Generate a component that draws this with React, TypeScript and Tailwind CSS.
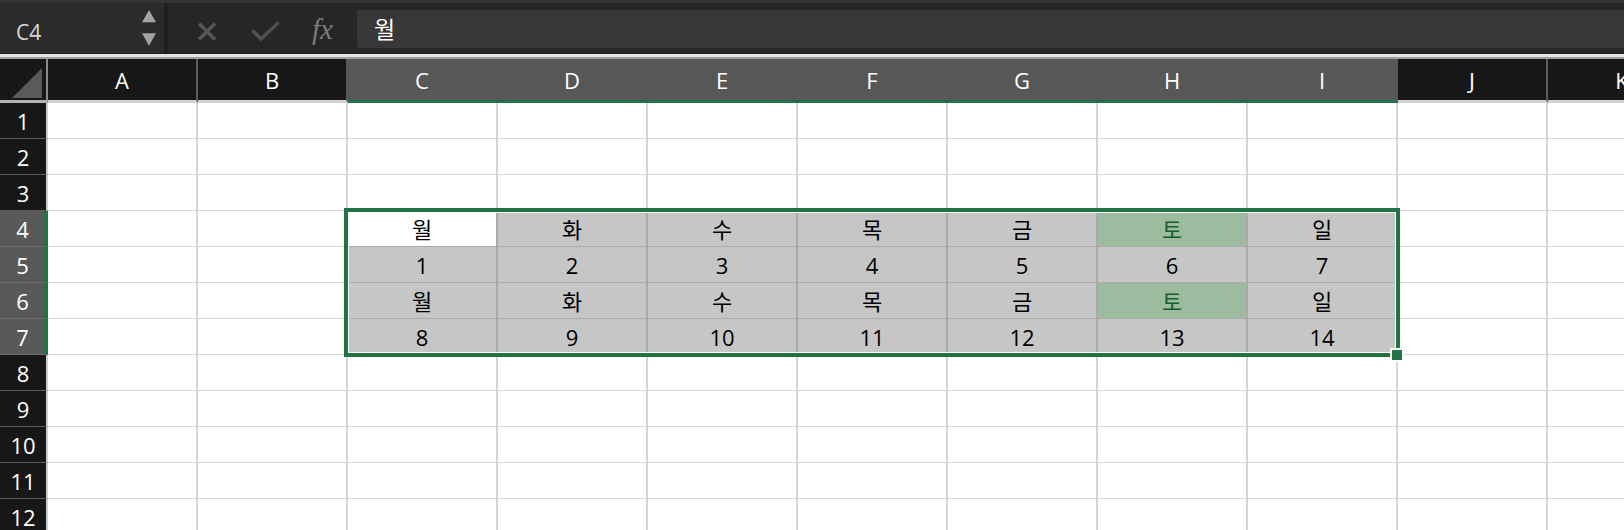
import React from "react";

const COLS = ["A", "B", "C", "D", "E", "F", "G", "H", "I", "J", "K"];
const DAYS = ["월", "화", "수", "목", "금", "토", "일"];
const DATA: Record<number, string[]> = {
  4: DAYS,
  5: ["1", "2", "3", "4", "5", "6", "7"],
  6: DAYS,
  7: ["8", "9", "10", "11", "12", "13", "14"],
};

const inColRange = (ci: number) => ci >= 2 && ci <= 8;
const inRowRange = (r: number) => r >= 4 && r <= 7;

function Cell({ r, ci }: { r: number; ci: number }) {
  const inRange = inRowRange(r) && inColRange(ci);
  const active = r === 4 && ci === 2;
  const good = inRange && ci === 7 && (r === 4 || r === 6);
  const text = inRange ? DATA[r][ci - 2] : "";
  let bg = "bg-white";
  if (inRange) bg = good ? "bg-[#9dbb9f]" : "bg-[#c6c6c6]";
  if (active) bg = "bg-white";
  const border = inRange ? "border-[#a9a9a9]" : "border-[#d5d5d5]";
  const color = good ? "text-[#14602a]" : "text-black";
  return (
    <div
      className={`w-[150px] shrink-0 h-full border-r-2 border-b ${border} ${bg} ${color} flex items-center justify-center text-[22px] leading-none`}
    >
      {text}
    </div>
  );
}

function RowHeader({ r }: { r: number }) {
  const sel = inRowRange(r);
  return (
    <div
      className={
        sel
          ? "w-[48px] shrink-0 h-full bg-[#595959] border-r-4 border-r-[#217346] border-b border-b-[#6e6e6e] flex items-center justify-center pl-[1px] text-white text-[22px] leading-none"
          : "w-[48px] shrink-0 h-full bg-[#171717] border-r-2 border-r-[#cfcfcf] border-b border-b-[#5a5a5a] flex items-center justify-center text-white text-[22px] leading-none"
      }
    >
      {r}
    </div>
  );
}

function ColHeader({ ci }: { ci: number }) {
  const sel = inColRange(ci);
  let right = "border-r-[#5c5c5c]";
  if (sel || ci === 1) right = "border-r-[#575757]";
  return (
    <div
      className={`w-[150px] shrink-0 h-full border-r-2 ${right} border-b-[3px] ${
        sel ? "bg-[#575757] border-b-[#217346]" : "bg-[#171717] border-b-[#d2d2d2]"
      } flex items-center justify-center text-white text-[22px] leading-none`}
    >
      {COLS[ci]}
    </div>
  );
}

export default function App() {
  const rows = Array.from({ length: 12 }, (_, i) => i + 1);
  return (
    <div className="relative w-[1624px] h-[530px] overflow-hidden bg-white font-['Open_Sans','Noto_Sans_CJK_KR',sans-serif]">
      {/* Top formula bar */}
      <div className="h-[59px] flex flex-col bg-[#262626]">
        <div className="h-[3px] bg-[#333333]" />
        <div className="h-[50px] flex items-stretch">
          <div className="w-[164px] shrink-0 bg-[#2b2b2b] flex items-center pl-[16px] pr-[8px]">
            <span className="text-[21px] text-[#d8d8d8] leading-none pt-[9px]">C4</span>
            <svg className="ml-auto" width="14" height="36" viewBox="0 0 14 36">
              <polygon points="0,12.3 7,0 14,12.3" fill="#a3a3a3" />
              <polygon points="0,23.3 14,23.3 7,35.7" fill="#a3a3a3" />
            </svg>
          </div>
          <div className="w-[4px] shrink-0 bg-[#1e1e1e]" />
          <div className="w-[189px] shrink-0 flex items-center">
            <svg className="ml-[29px] mt-[6px]" width="20" height="19" viewBox="0 0 20 19">
              <path d="M2 1.5 L18 17.5 M18 1.5 L2 17.5" stroke="#555555" strokeWidth="3.6" />
            </svg>
            <svg className="ml-[34px] mt-[6px]" width="29" height="20" viewBox="0 0 29 20">
              <path d="M1.5 9.5 L10 18 L27.5 1.5" stroke="#505050" strokeWidth="3.6" fill="none" />
            </svg>
            <span className="ml-[32px] mt-[2px] font-['Liberation_Serif',serif] italic text-[29px] leading-none text-[#7b7b7b]">
              fx
            </span>
          </div>
          <div className="flex-1 flex items-start">
            <div className="mt-[7px] h-[38px] w-full bg-[#383838] rounded-l-[3px] flex items-center pl-[17px] text-white text-[23px] leading-none">
              월
            </div>
          </div>
        </div>
        <div className="h-[1px] bg-[#1f1f1f]" />
        <div className="h-[3px] bg-[#e4e4e4]" />
        <div className="h-[2px] bg-[#9f9f9f]" />
      </div>

      {/* Column headers */}
      <div className="h-[44px] flex">
        <div className="w-[48px] shrink-0 h-full bg-[#171717] border-r-2 border-r-[#8c8c8c] border-b-[3px] border-b-[#b4b4b4]">
          <svg width="46" height="41" viewBox="0 0 46 41">
            <polygon points="12,39 42,39 42,9" fill="#5b5b5b" />
          </svg>
        </div>
        {COLS.map((_, ci) => (
          <ColHeader key={ci} ci={ci} />
        ))}
      </div>

      {/* Rows */}
      <div className="flex flex-col">
        {rows.map((r) => (
          <div key={r} className="h-[36px] flex">
            <RowHeader r={r} />
            {COLS.map((_, ci) => (
              <Cell key={ci} r={r} ci={ci} />
            ))}
          </div>
        ))}
      </div>

      {/* Selection border overlay */}
      <div className="absolute left-[344px] top-[208px] w-[1056px] h-[149px] border-4 border-[#217346] shadow-[inset_0_0_0_1px_#ffffff] pointer-events-none" />
      {/* Fill handle */}
      <div className="absolute left-[1390px] top-[348px] w-[14px] h-[14px] bg-[#217346] border-2 border-white" />
    </div>
  );
}
